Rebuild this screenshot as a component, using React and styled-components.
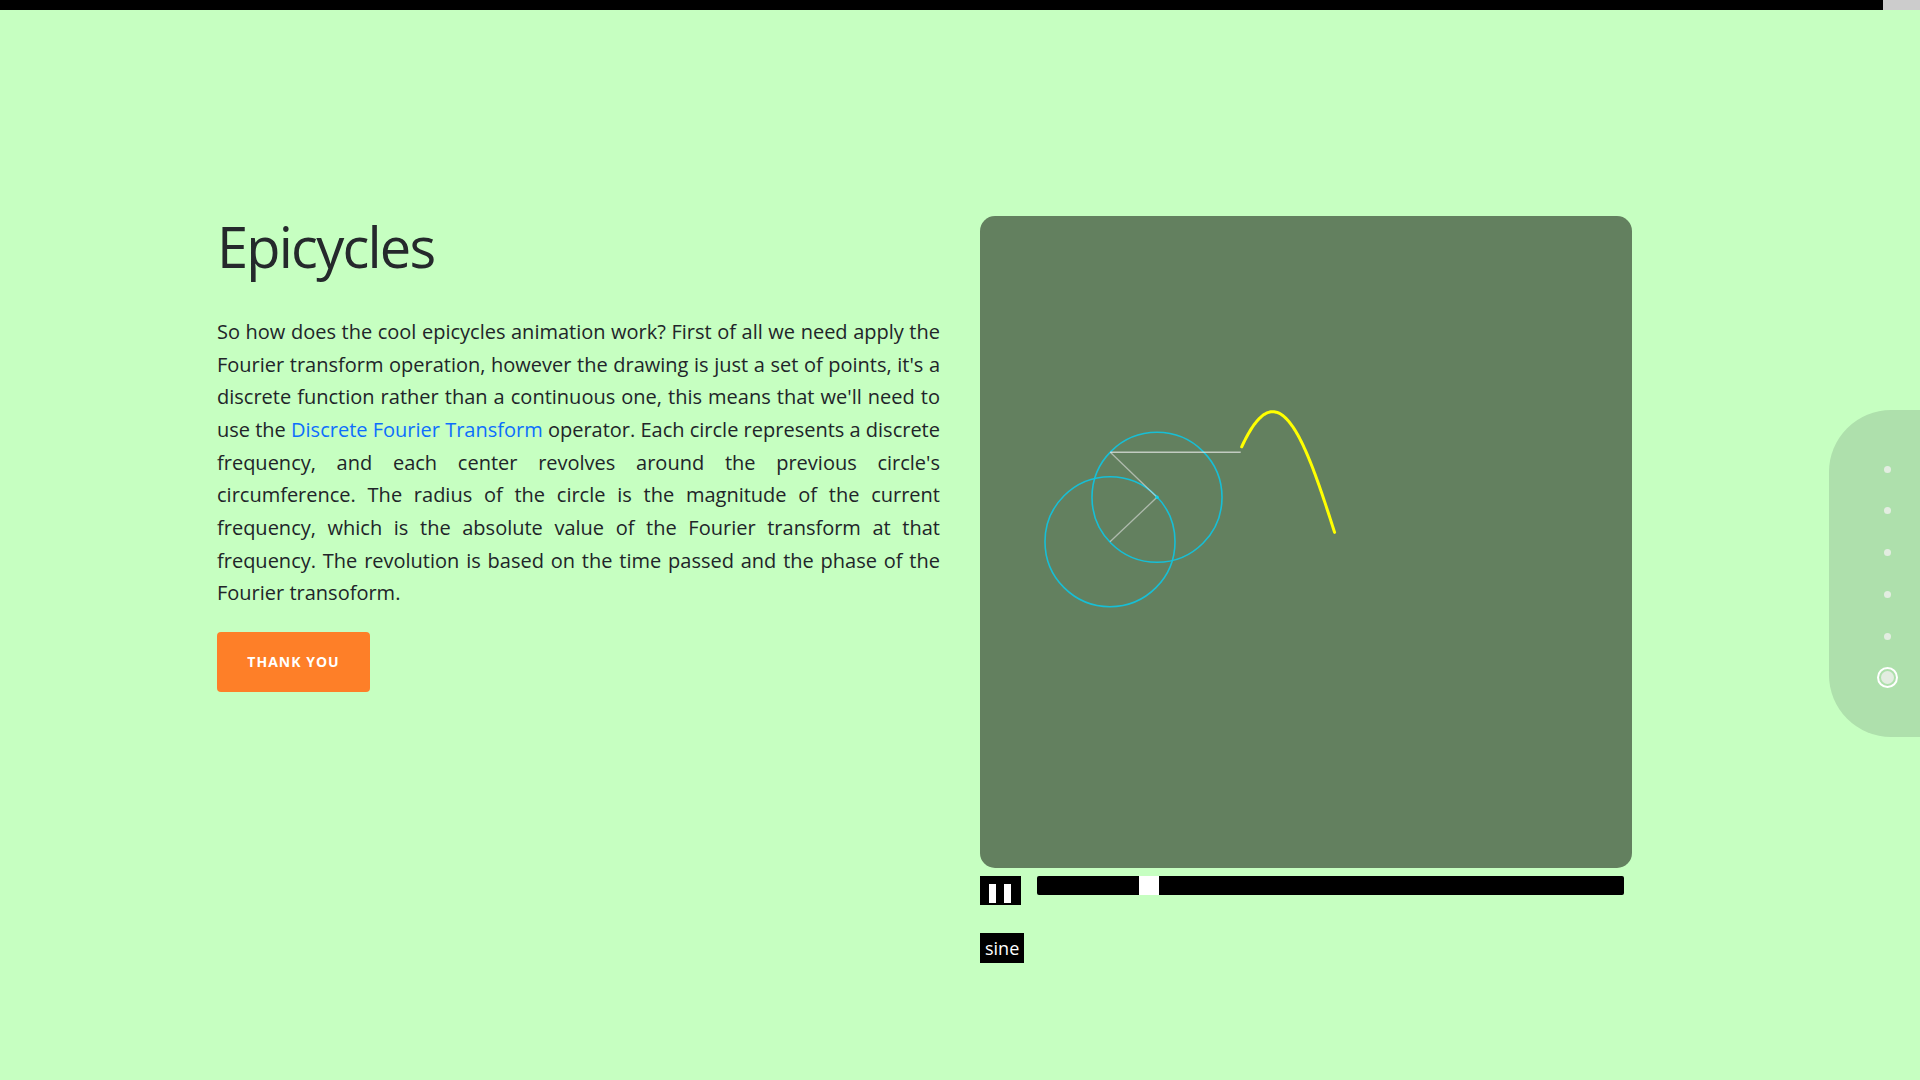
import React from "react";
import styled, { createGlobalStyle } from "styled-components";

const GlobalStyle = createGlobalStyle`
  html, body {
    margin: 0;
    padding: 0;
    background: #c6ffc1;
    font-family: "Open Sans", "Noto Sans", sans-serif;
    color: #212529;
  }
  * { box-sizing: border-box; }
`;

const Progress = styled.div`
  height: 10px;
  background: #cccccc;
`;

const ProgressFill = styled.div`
  height: 100%;
  background: #000;
`;

const Section = styled.section`
  display: flex;
  align-items: flex-start;
  gap: 40px;
  padding: 203px 0 0 217px;
  min-height: 1070px;
`;

const TextColumn = styled.div`
  width: 723px;
`;

const Title = styled.h1`
  margin: 0 0 36px;
  font-size: 56px;
  line-height: 1.2;
  font-weight: 400;
  letter-spacing: -1.8px;
  color: #25292c;
`;

const Body = styled.p`
  margin: 0 0 22px;
  font-size: 20px;
  line-height: 32.64px;
  text-align: justify;
`;

const Link = styled.a`
  color: #0d6efd;
  text-decoration: none;
`;

const ThanksButton = styled.button`
  width: 153px;
  height: 60px;
  border: none;
  border-radius: 4px;
  background: #fe7f28;
  color: #fff;
  font-family: "Open Sans", sans-serif;
  font-weight: 700;
  font-size: 14px;
  letter-spacing: 1px;
  cursor: pointer;
`;

const CanvasColumn = styled.div`
  width: 652px;
  margin-top: 3px;
  display: flex;
  flex-direction: column;
`;

const CanvasFrame = styled.div`
  width: 652px;
  height: 652px;
  border-radius: 15px;
  background: #63805f;
  overflow: hidden;
`;

const Controls = styled.div`
  display: flex;
  align-items: flex-start;
  gap: 16px;
  margin-top: 8px;
`;

const PauseButton = styled.button`
  width: 41px;
  height: 29px;
  background: #000;
  border: none;
  padding: 8px 10px 2px 9px;
  display: flex;
  gap: 8px;
  cursor: pointer;
`;

const PauseBar = styled.span`
  width: 7px;
  height: 19px;
  background: #fff;
`;

const SliderTrack = styled.div`
  position: relative;
  width: 587px;
  height: 19px;
  background: #000;
  border-radius: 2px;
`;

const SliderThumb = styled.div`
  position: absolute;
  top: 0;
  width: 20px;
  height: 19px;
  background: #fff;
`;

const ModeButton = styled.button`
  align-self: flex-start;
  margin-top: 28px;
  height: 30px;
  padding: 0 5px;
  background: #000;
  color: #fff;
  border: none;
  font-family: "Open Sans", sans-serif;
  font-size: 18px;
  line-height: 30px;
`;

const SideNav = styled.nav`
  position: fixed;
  right: 0;
  top: 410px;
  width: 91px;
  height: 327px;
  background: #aee0ac;
  border-radius: 62px 0 0 62px;
  padding: 48px 0 0 47px;
  display: flex;
  flex-direction: column;
  gap: 19.8px;
`;

const DotSlot = styled.div`
  width: 22px;
  height: 22px;
  display: flex;
  align-items: center;
  justify-content: center;
`;

const Dot = styled.span`
  display: block;
  width: ${(p) => (p.$active ? "21px" : "7px")};
  height: ${(p) => (p.$active ? "21px" : "7px")};
  border-radius: 50%;
  background: #e3ede1;
  background-clip: content-box;
  padding: ${(p) => (p.$active ? "2px" : "0")};
  border: ${(p) => (p.$active ? "2px solid #fff" : "none")};
`;

function wavePath() {
  const pts = [];
  const y0 = 325.7;
  const amp = 130;
  for (let d = 46.9; d <= 176.7; d += 1.5) {
    const x = 261.7 + (d - 46.9) * 0.72;
    const y = y0 - amp * Math.sin((d * Math.PI) / 180);
    pts.push(`${x.toFixed(2)},${y.toFixed(2)}`);
  }
  return "M" + pts.join(" L");
}

function Epicycles() {
  return (
    <svg width="652" height="652" viewBox="0 0 652 652">
      <circle cx="130" cy="325.7" r="65" fill="none" stroke="#17bfd6" strokeWidth="1.6" />
      <circle cx="177" cy="281.3" r="65" fill="none" stroke="#17bfd6" strokeWidth="1.6" />
      <line x1="130" y1="325.7" x2="177" y2="281.3" stroke="rgba(225,225,225,0.6)" strokeWidth="1.3" />
      <line x1="177" y1="281.3" x2="130.3" y2="236.3" stroke="rgba(225,225,225,0.6)" strokeWidth="1.3" />
      <line x1="130.3" y1="236.3" x2="260.7" y2="236.3" stroke="rgba(235,235,235,0.7)" strokeWidth="1.5" />
      <circle cx="177" cy="281.3" r="1.8" fill="#17d0e8" />
      <path d={wavePath()} fill="none" stroke="#ffff00" strokeWidth="3" strokeLinecap="round" />
    </svg>
  );
}

export default function App() {
  const progress = 1883 / 1920;
  const sliderValue = 102 / 567;
  return (
    <>
      <GlobalStyle />
      <Progress>
        <ProgressFill style={{ width: `${progress * 100}%` }} />
      </Progress>
      <Section>
        <TextColumn>
          <Title>Epicycles</Title>
          <Body>
            So how does the cool epicycles animation work? First of all we need apply the Fourier
            transform operation, however the drawing is just a set of points, it's a discrete
            function rather than a continuous one, this means that we'll need to use the{" "}
            <Link href="#">Discrete Fourier Transform</Link> operator. Each circle represents a
            discrete frequency, and each center revolves around the previous circle's
            circumference. The radius of the circle is the magnitude of the current frequency,
            which is the absolute value of the Fourier transform at that frequency. The revolution
            is based on the time passed and the phase of the Fourier transoform.
          </Body>
          <ThanksButton>THANK YOU</ThanksButton>
        </TextColumn>
        <CanvasColumn>
          <CanvasFrame>
            <Epicycles />
          </CanvasFrame>
          <Controls>
            <PauseButton aria-label="pause">
              <PauseBar />
              <PauseBar />
            </PauseButton>
            <SliderTrack>
              <SliderThumb style={{ left: `${sliderValue * 567}px` }} />
            </SliderTrack>
          </Controls>
          <ModeButton>sine</ModeButton>
        </CanvasColumn>
      </Section>
      <SideNav>
        {[0, 1, 2, 3, 4, 5].map((i) => (
          <DotSlot key={i}>
            <Dot $active={i === 5} />
          </DotSlot>
        ))}
      </SideNav>
    </>
  );
}
